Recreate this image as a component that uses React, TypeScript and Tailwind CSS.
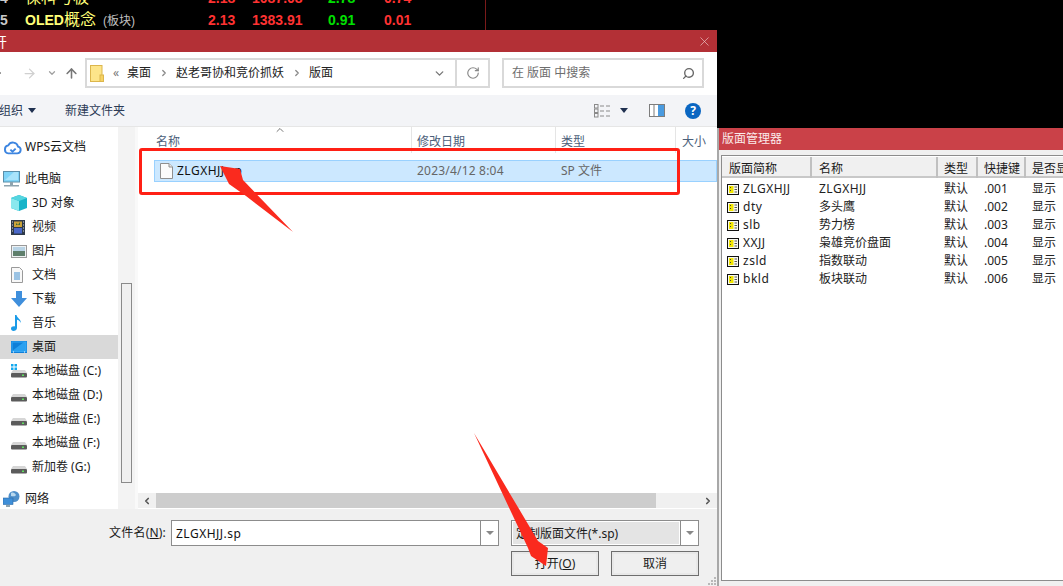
import React from "react";
import { ArrowUp, ArrowRight, ChevronDown, ChevronLeft, ChevronRight, ChevronUp, RotateCw, Search, X } from "lucide-react";

const font = "font-['Noto_Sans','Noto_Sans_CJK_SC',sans-serif]";

const FolderIcon = () => (
  <svg width="14" height="17" viewBox="0 0 14 17" className="shrink-0">
    <rect x="0.5" y="0.5" width="11.5" height="16" fill="#fde58a" stroke="#dcb64c" />
    <rect x="10" y="10" width="3.5" height="6.5" fill="#f6d263" stroke="#dcb64c" />
  </svg>
);

const CloudIcon = () => (
  <svg width="19" height="16" viewBox="0 0 18 15" fill="none" stroke="#3d85e0" strokeWidth="1.8">
    <path d="M5 13.5h8.5a3.2 3.2 0 0 0 .8-6.3A5 5 0 0 0 5 6a3.8 3.8 0 0 0 0 7.5z" />
    <path d="M7 10l2 2 3-3" />
  </svg>
);

const PcIcon = () => (
  <svg width="17" height="16" viewBox="0 0 17 16">
    <rect x="0.5" y="0.5" width="16" height="10.5" fill="#7fd3f7" stroke="#5b8ea8" />
    <path d="M2 9l9-8h4v8z" fill="#a9e4fb" />
    <rect x="7" y="11" width="3" height="3" fill="#8ea3ae" />
    <rect x="1" y="14" width="15" height="1.5" fill="#8ea3ae" />
  </svg>
);

const CubeIcon = () => (
  <svg width="16" height="16" viewBox="0 0 16 16">
    <path d="M8 0l8 3v10l-8 3-8-3V3z" fill="#17b4c9" />
    <path d="M0 3l8 3v10l-8-3z" fill="#8ae8ee" />
    <path d="M8 0l8 3-8 3-8-3z" fill="#55d5e0" />
  </svg>
);

const VideoIcon = () => (
  <svg width="14" height="15" viewBox="0 0 14 15">
    <rect width="14" height="15" fill="#2e3a4a" />
    <rect x="3" y="1.5" width="8" height="5.5" fill="#c9a23a" />
    <rect x="3" y="8" width="8" height="5.5" fill="#4a68c9" />
    <path d="M5 3l2 2 2-3v3H5z" fill="#3a6a3a" />
    <path d="M1 2h1M1 5h1M1 8h1M1 11h1M12 2h1M12 5h1M12 8h1M12 11h1" stroke="#d8d8d8" />
  </svg>
);

const PictureIcon = () => (
  <svg width="16" height="13" viewBox="0 0 16 13">
    <rect x="0.5" y="0.5" width="15" height="12" fill="#eef2f4" stroke="#9a9a9a" />
    <rect x="2" y="2" width="12" height="4" fill="#b9d4e6" />
    <rect x="2" y="6" width="12" height="5" fill="#5f7f6c" />
  </svg>
);

const DocIcon = () => (
  <svg width="12" height="16" viewBox="0 0 12 16">
    <path d="M.5.5h8l3 3v12H.5z" fill="#f8f8f8" stroke="#9a9a9a" />
    <path d="M3 6h6M3 8h6M3 10h6M3 12h6" stroke="#3f8ecf" />
  </svg>
);

const DownloadIcon = () => (
  <svg width="16" height="16" viewBox="0 0 16 16">
    <path d="M5 0h6v7h5l-8 9-8-9h5z" fill="#3f8fdc" />
  </svg>
);

const MusicIcon = () => (
  <svg width="11" height="16" viewBox="0 0 11 16">
    <path d="M4 0h1.5c.5 3 4.500 4 4.500 8-1-2-2.500-3-4-3.300V13c0 2-2 3-3.500 3S0 15 0 13.500 2 11 4 11.500z" fill="#1a9be8" />
  </svg>
);

const DesktopIcon = () => (
  <svg width="16" height="12" viewBox="0 0 16 12">
    <rect width="16" height="12" fill="#0f7fd8" />
    <path d="M1 10L13 1h2v9z" fill="#2aa0f0" />
    <rect x="1" y="1" width="14" height="9.500" fill="none" stroke="#35a8f5" />
    <path d="M2 11h1M13 11h1" stroke="#fff" />
  </svg>
);

const DriveIcon = ({ windows }: { windows?: boolean }) => (
  <svg width="16" height="14" viewBox="0 0 16 14">
    {windows && <path d="M0 0h2.500v2.500H0zM3.500 0H6v2.500H3.500zM0 3.500h2.500V6H0zM3.500 3.500H6V6H3.500z" fill="#13a8ee" />}
    <path d="M2 6h12l2 3H0z" fill="#d6d6d6" />
    <rect y="9" width="16" height="4.500" rx="1" fill="#5b5b5b" />
    <rect x="11" y="10.500" width="2" height="1.500" fill="#5fe05f" />
  </svg>
);

const NetworkIcon = () => (
  <svg width="17" height="16" viewBox="0 0 17 16">
    <circle cx="11" cy="5.500" r="5.500" fill="#4f8fc9" />
    <path d="M8 2c2-1 4 0 5 2-1 2-3 1-5 1z" fill="#b8d8ee" />
    <rect y="7" width="10" height="6.500" fill="#3f8fd8" stroke="#2a6aa8" strokeWidth="0.6" />
    <rect x="3" y="14" width="4" height="2" fill="#8ea3ae" />
  </svg>
);

const FileIcon = () => (
  <svg width="13" height="16" viewBox="0 0 13 16" className="shrink-0">
    <path d="M.5.5h8.500l3.500 3.500v11.500H.5z" fill="#fbfbfb" stroke="#8f8f8f" />
    <path d="M9 .5V4h3.500" fill="#e8e8e8" stroke="#8f8f8f" />
  </svg>
);

const LayoutIcon = () => (
  <svg width="12" height="11" viewBox="0 0 12 11" className="shrink-0">
    <rect x="0.500" y="0.500" width="11" height="10" fill="#f8f8f0" stroke="#111" />
    <rect x="2" y="2" width="4.500" height="7" fill="#f2e600" />
    <path d="M7.500 3H10M7.500 5.500H10M7.500 8H10" stroke="#555" />
    <rect x="3" y="3" width="1" height="1" fill="#444" />
    <rect x="3" y="6" width="1" height="1" fill="#444" />
  </svg>
);

const ViewIcon = () => (
  <svg width="17" height="14" viewBox="0 0 17 14" fill="none">
    <rect x="0.500" y="0.500" width="3.500" height="3.500" stroke="#8a8a8a" />
    <rect x="0.500" y="5" width="3.500" height="3.500" stroke="#8a8a8a" />
    <rect x="0.500" y="9.500" width="3.500" height="3.500" stroke="#8a8a8a" />
    <path d="M6 2h4M12 2h4M6 7h4M12 7h4M6 12h4M12 12h4" stroke="#8a8a8a" />
  </svg>
);

const PaneIcon = () => (
  <svg width="16" height="13" viewBox="0 0 16 13">
    <rect x="0.500" y="0.500" width="15" height="12" fill="#fff" stroke="#7d7d7d" />
    <rect x="9" y="1" width="6" height="11" fill="#4a9be0" />
    <rect x="4.500" y="1" width="1" height="11" fill="#7d7d7d" />
  </svg>
);

const sideItems = [
  { icon: <CloudIcon />, label: "WPS云文档", top: true },
  { icon: <PcIcon />, label: "此电脑", top: true, gap: true },
  { icon: <CubeIcon />, label: "3D 对象" },
  { icon: <VideoIcon />, label: "视频" },
  { icon: <PictureIcon />, label: "图片" },
  { icon: <DocIcon />, label: "文档" },
  { icon: <DownloadIcon />, label: "下载" },
  { icon: <MusicIcon />, label: "音乐" },
  { icon: <DesktopIcon />, label: "桌面", active: true },
  { icon: <DriveIcon windows />, label: "本地磁盘 (C:)" },
  { icon: <DriveIcon />, label: "本地磁盘 (D:)" },
  { icon: <DriveIcon />, label: "本地磁盘 (E:)" },
  { icon: <DriveIcon />, label: "本地磁盘 (F:)" },
  { icon: <DriveIcon />, label: "新加卷 (G:)" },
  { icon: <NetworkIcon />, label: "网络", top: true, gap: true },
];

const layouts = [
  ["ZLGXHJJ", "ZLGXHJJ", ".001"],
  ["dty", "多头鹰", ".002"],
  ["slb", "势力榜", ".003"],
  ["XXJJ", "枭雄竞价盘面", ".004"],
  ["zsld", "指数联动", ".005"],
  ["bkld", "板块联动", ".006"],
];

const StockRow = ({ no, latin, cjk, tag, vals }: { no: string; latin?: string; cjk: string; tag?: string; vals: string[] }) => (
  <div className="flex h-[22px] items-center text-[14px] font-bold text-[#ff3232] font-['Liberation_Sans','Noto_Sans_CJK_SC',sans-serif]">
    <span className="w-[25px] text-[#c8c8c8]">{no}</span>
    <span className="w-[183px] truncate text-[#ffff78]">
      {latin}
      <span className="text-[16px] font-normal">{cjk}</span>
      {tag && <span className="ml-[7px] text-[12px] font-normal text-[#c0c0c0]">{tag}</span>}
    </span>
    <span className="w-[44px]">{vals[0]}</span>
    <span className="w-[76px]">{vals[1]}</span>
    <span className="w-[56px] text-[#00e000]">{vals[2]}</span>
    <span>{vals[3]}</span>
  </div>
);

export default function App() {
  return (
    <div className={`relative flex h-[586px] w-full flex-col overflow-hidden bg-black text-[12px] text-[#1a1a1a] ${font}`}>
      {/* stock list behind the dialog */}
      <div className="h-[30px] w-[486px] shrink-0 overflow-hidden border-r border-[#7a1a1a]">
        <div className="-mt-[13px]">
          <StockRow no="4" cjk="保科号板" vals={["2.18", "1087.08", "2.78", "0.74"]} />
          <StockRow no="5" latin="OLED" cjk="概念" tag="(板块)" vals={["2.13", "1383.91", "0.91", "0.01"]} />
        </div>
      </div>

      {/* open file dialog */}
      <div className="flex min-h-0 w-[717px] flex-1 flex-col bg-white">
        <div className="flex h-[22px] shrink-0 items-center justify-between bg-[#b33036] pr-[5px] text-[14px] text-white">
          <span className="-ml-[7px]">开</span>
          <X size={15} strokeWidth={1} color="#f0d0d0" />
        </div>

        {/* address bar */}
        <div className="flex h-[43px] shrink-0 items-center pb-[1px] pr-[13px]">
          <ArrowRight size={14} color="#555" className="-ml-[11px]" />
          <ArrowRight size={15} color="#d0d0d0" className="ml-[19px]" />
          <ChevronDown size={10} strokeWidth={3} color="#a0a0a0" className="ml-[10px]" />
          <ArrowUp size={15} strokeWidth={2.5} color="#777" className="ml-[7px]" />
          <div className="ml-[6px] flex h-[30px] w-[405px] items-center border-2 border-[#d9d9d9] text-[#222]">
            <div className="flex w-[346px] items-center pl-[3px]">
              <FolderIcon />
              <span className="ml-[9px] w-[14px] text-[#777]">«</span>
              <span>桌面</span>
              <ChevronRight size={10} strokeWidth={3} color="#888" className="ml-[8px] mr-[7px]" />
              <span>赵老哥协和竞价抓妖</span>
              <ChevronRight size={10} strokeWidth={3} color="#888" className="ml-[8px] mr-[7px]" />
              <span>版面</span>
            </div>
            <ChevronDown size={13} strokeWidth={2.500} color="#777" />
            <div className="ml-[9px] flex h-full flex-1 items-center justify-center border-l-2 border-[#d9d9d9]">
              <RotateCw size={14} color="#888" strokeWidth={2} />
            </div>
          </div>
          <div className="ml-[12px] flex h-[30px] flex-1 items-center justify-between border-2 border-[#d9d9d9] pl-[8px] pr-[7px] text-[#6d6d6d]">
            <span>在 版面 中搜索</span>
            <Search size={13} strokeWidth={2.500} color="#666" className="-scale-x-100" />
          </div>
        </div>

        {/* toolbar */}
        <div className="flex h-[31px] shrink-0 items-center bg-[#f3f4f7] text-[#2c3b56]">
          <span className="-ml-[1px]">组织</span>
          <span className="ml-[5px] h-0 w-0 border-x-[4px] border-t-[5px] border-x-transparent border-t-[#1f3050]" />
          <span className="ml-[29px]">新建文件夹</span>
          <div className="ml-auto flex items-center pr-[16px]">
            <ViewIcon />
            <span className="ml-[9px] h-0 w-0 border-x-[4px] border-t-[5px] border-x-transparent border-t-[#1f3050]" />
            <span className="ml-[21px]"><PaneIcon /></span>
            <span className="ml-[20px] flex h-[16px] w-[16px] items-center justify-center rounded-full bg-[#0a66c2] text-[12px] font-bold text-white">?</span>
          </div>
        </div>
        <div className="h-px shrink-0 bg-[#e6e6e6]" />

        {/* main */}
        <div className="flex h-[382px] shrink-0 overflow-hidden">
          <div className="w-[118px] shrink-0 pt-[8px]">
            {sideItems.map((it) => (
              <div
                key={it.label}
                className={`flex h-[24px] items-center whitespace-nowrap ${it.gap ? "mt-2" : ""} ${it.active ? "bg-[#d9d9d9]" : ""} ${it.top ? "pl-[3px]" : "pl-[11px]"}`}
              >
                <span className="flex w-[21px] shrink-0 items-center">{it.icon}</span>
                <span className={it.top ? "ml-[1px]" : ""}>{it.label}</span>
              </div>
            ))}
          </div>
          <div className="flex w-[17px] shrink-0 flex-col bg-[#f3f3f3] px-[3px] pt-[156px]">
            <div className="h-[200px] border border-[#8a8a8a] bg-[#f0f0f0]" />
          </div>
          <div className="w-[3px] shrink-0 bg-[#f9f9f9]" />

          <div className="flex min-w-0 flex-1 flex-col">
            {/* columns */}
            <div className="relative flex h-[26px] shrink-0 text-[#4c607a]">
              <ChevronUp size={12} color="#777" className="absolute left-[136px] -top-[3px]" />
              <div className="w-[273px] pl-[18px] pt-[6px]">名称</div>
              <div className="w-[144px] border-l border-[#e5e5e5] pl-[5px] pt-[6px]">修改日期</div>
              <div className="w-[120px] border-l border-[#e5e5e5] pl-[5px] pt-[6px]">类型</div>
              <div className="flex-1 border-l border-[#e5e5e5] pl-[6px] pt-[6px]">大小</div>
            </div>
            <div className="ml-[16px] mt-[7px] flex h-[22px] shrink-0 items-center border border-[#99d1ff] bg-[#cce8ff] text-[#666]">
              <span className="ml-[5px]"><FileIcon /></span>
              <span className="ml-[4px] w-[240px] tracking-[0.5px] text-[#111]">ZLGXHJJ.sp</span>
              <span className="w-[144px] tracking-[0.2px]">2023/4/12 8:04</span>
              <span>SP 文件</span>
            </div>
            <div className="flex-1" />
            {/* horizontal scrollbar */}
            <div className="mb-[1px] flex h-[15px] shrink-0 items-center bg-[#f0f0f0]">
              <div className="flex w-[18px] justify-center"><ChevronLeft size={10} strokeWidth={4} color="#555" /></div>
              <div className="h-full w-[500px] bg-[#cdcdcd]" />
              <div className="ml-auto flex w-[18px] justify-center"><ChevronRight size={10} strokeWidth={4} color="#555" /></div>
            </div>
          </div>
        </div>

        {/* file name and buttons */}
        <div className="relative flex flex-1 flex-col items-end bg-[#f0f0f0] pr-[18px] pt-[11px]">
          <div className="flex h-[26px] items-center">
            <span className="mr-[5px] tracking-[0.2px]">文件名(<u>N</u>):</span>
            <div className="flex h-full w-[328px] border border-[#8c8c8c] bg-white">
              <span className="flex-1 pl-[4px] pt-[4px] tracking-[0.5px] text-[#111]">ZLGXHJJ.sp</span>
              <span className="flex w-[18px] items-center justify-center border-l border-[#8c8c8c]">
                <span className="h-0 w-0 border-x-[4px] border-t-[4px] border-x-transparent border-t-[#888]" />
              </span>
            </div>
            <div className="ml-[12px] flex h-full w-[188px] border border-[#8c8c8c] bg-white">
              <span className="m-[1px] flex-1 bg-[#e4e4e4] pl-[3px] pt-[3px]">定制版面文件(*.sp)</span>
              <span className="flex w-[18px] items-center justify-center border-l border-[#8c8c8c]">
                <span className="h-0 w-0 border-x-[4px] border-t-[4px] border-x-transparent border-t-[#888]" />
              </span>
            </div>
          </div>
          <div className="mt-[5px] flex gap-[12px]">
            <button className="h-[25px] w-[88px] border border-[#6e6e6e] bg-[#efefef] shadow-[inset_0_0_0_2px_#e8e8e8]">打开(<u>O</u>)</button>
            <button className="h-[25px] w-[88px] border border-[#6e6e6e] bg-[#efefef] shadow-[inset_0_0_0_2px_#e8e8e8]">取消</button>
          </div>
          {/* resize grip */}
          <svg className="absolute bottom-[1px] right-[1px]" width="9" height="9" viewBox="0 0 9 9" fill="#b8b8b8">
            <rect x="7" y="1" width="2" height="2" />
            <rect x="4" y="4" width="2" height="2" />
            <rect x="7" y="4" width="2" height="2" />
            <rect x="1" y="7" width="2" height="2" />
            <rect x="4" y="7" width="2" height="2" />
            <rect x="7" y="7" width="2" height="2" />
          </svg>
        </div>
      </div>

      {/* layout manager window */}
      <div className="absolute bottom-0 left-[717px] right-0 top-[128px] flex flex-col border-l-2 border-[#a8a8a8] bg-[#f0f0f0]">
        <div className="flex h-[22px] shrink-0 items-center bg-[#ca4148] pl-[3px] text-[12px] text-[#fbeaea]">版面管理器</div>
        <div className="mb-[5px] ml-[2px] mt-[5px] flex-1 overflow-hidden border-y border-l border-[#8c8c8c] bg-white pt-[1px]">
          <div className="flex h-[21px] w-[360px] items-center bg-[#f0f0f0] shadow-[inset_0_-2px_0_#c8c8c8]">
            <span className="h-full w-[90px] border-r-2 border-[#c0c0c0] pl-[7px] pt-[3px]">版面简称</span>
            <span className="h-full w-[126px] border-r-2 border-[#c0c0c0] pl-[7px] pt-[3px]">名称</span>
            <span className="h-full w-[40px] border-r-2 border-[#c0c0c0] pl-[6px] pt-[3px]">类型</span>
            <span className="h-full w-[48px] border-r-2 border-[#c0c0c0] pl-[6px] pt-[3px]">快捷键</span>
            <span className="h-full pl-[6px] pt-[3px]">是否显示</span>
          </div>
          <div className="mt-[2px] w-[360px] text-[#222]">
            {layouts.map((row) => (
              <div key={row[0]} className="flex h-[18px] items-center">
                <span className="flex w-[89px] items-center gap-[4px] pl-[5px]"><LayoutIcon /><span className="tracking-[0.5px]">{row[0]}</span></span>
                <span className="w-[126px] pl-[8px]">{row[1].startsWith("ZL") ? <span className="tracking-[0.5px]">{row[1]}</span> : row[1]}</span>
                <span className="w-[40px] pl-[7px]">默认</span>
                <span className="w-[48px] pl-[7px]">{row[2]}</span>
                <span className="pl-[7px]">显示</span>
              </div>
            ))}
          </div>
        </div>
      </div>

      {/* red annotations */}
      <div className="absolute left-[139px] top-[148px] h-[47px] w-[541px] rounded-[3px] border-[3px] border-[#ff2015]" />
      <svg className="absolute inset-0" width="1063" height="586" viewBox="0 0 1063 586" fill="#fa2a1e">
        <path d="M220 166L240 169 243 180 293 232 246 196 229 184z" />
        <path d="M474 433L538 541 548 548 546 566 531 556 528 548z" />
      </svg>
    </div>
  );
}
